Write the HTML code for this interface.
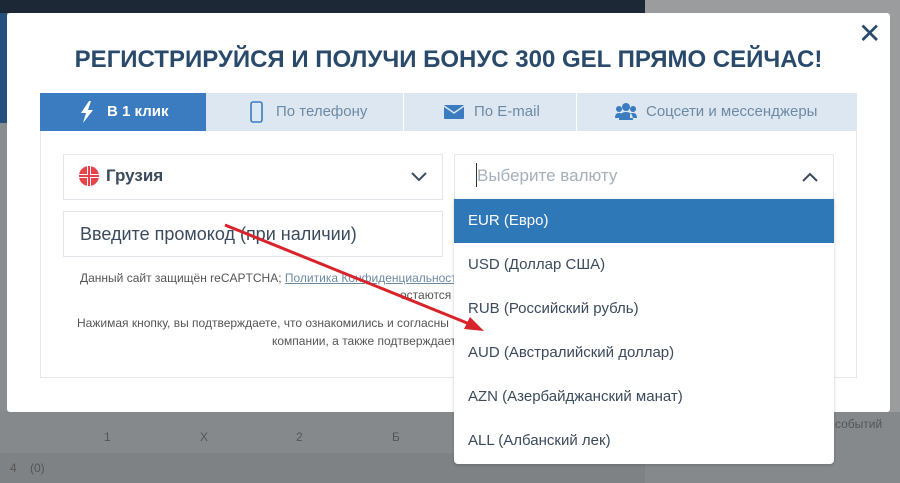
<!DOCTYPE html>
<html><head><meta charset="utf-8"><style>
*{box-sizing:border-box;margin:0;padding:0}
body{width:900px;height:483px;overflow:hidden;position:relative;background:#8a8d90;font-family:"Liberation Sans",sans-serif}
.abs{position:absolute}
.t{color:#3b4a5c}
</style></head><body>
<div class="abs" style="left:0;top:0;width:645px;height:13px;background:#1d2836"></div>
<div class="abs" style="left:0;top:13px;width:7px;height:110px;background:#24507a"></div>
<div class="abs" style="left:645px;top:0;width:255px;height:483px;background:#9a9c9e"></div>
<div class="abs" style="left:0;top:412px;width:900px;height:71px;background:#86898c"></div>
<div class="abs" style="left:0;top:453px;width:645px;height:30px;background:#7f8285"></div>
<div class="abs" style="left:104px;top:430px;color:#555;font-size:12px">1</div>
<div class="abs" style="left:200px;top:430px;color:#555;font-size:12px">X</div>
<div class="abs" style="left:296px;top:430px;color:#555;font-size:12px">2</div>
<div class="abs" style="left:392px;top:430px;color:#555;font-size:12px">Б</div>
<div class="abs" style="left:10px;top:461px;color:#555;font-size:12px">4 &nbsp;&nbsp;&nbsp;(0)</div>
<div class="abs" style="left:835px;top:417px;color:#555;font-size:12px">событий</div>

<div class="abs" style="left:7px;top:13px;width:883px;height:399px;background:#fff;border-radius:3px"></div>
<div class="abs" style="left:858px;top:20px;font-size:28px;color:#2a4a6c;line-height:28px">✕</div>
<div class="abs" style="left:0;top:46px;width:900px;text-align:center;padding-right:3px;font-size:24px;font-weight:bold;color:#2a4a6c;letter-spacing:0">РЕГИСТРИРУЙСЯ И ПОЛУЧИ БОНУС 300 GEL ПРЯМО СЕЙЧАС!</div>

<div class="abs" style="left:40px;top:93px;width:817px;height:38px;background:#dce7f1"></div>
<div class="abs" style="left:40px;top:93px;width:166px;height:38px;background:#3a7cbf;color:#fff;font-size:15px;font-weight:bold;line-height:38px;padding-left:67px">В 1 клик</div>
<svg class="abs" style="left:80px;top:101px" width="14" height="22" viewBox="0 0 14 22"><path d="M9 0L1 12h5l-3 10 10-13H8l3-9z" fill="#fff"/></svg>
<div class="abs" style="left:403px;top:93px;width:1px;height:38px;background:#fff"></div>
<div class="abs" style="left:576px;top:93px;width:1px;height:38px;background:#fff"></div>
<svg class="abs" style="left:250px;top:101px" width="13" height="22"><rect x="1" y="1" width="11" height="20" rx="2" fill="none" stroke="#3a7cbf" stroke-width="1.6"/></svg>
<div class="abs" style="left:276px;top:93px;line-height:38px;font-size:15px;color:#6d8aa5">По телефону</div>
<svg class="abs" style="left:444px;top:105px" width="20" height="14"><rect width="20" height="14" rx="1" fill="#3a7cbf"/><path d="M0 1l10 7 10-7" stroke="#dce7f1" stroke-width="1.5" fill="none"/></svg>
<div class="abs" style="left:474px;top:93px;line-height:38px;font-size:15px;color:#6d8aa5">По E-mail</div>
<svg class="abs" style="left:615px;top:102px" width="22" height="18"><circle cx="11" cy="5" r="4" fill="#3a7cbf"/><circle cx="4" cy="7" r="3" fill="#3a7cbf"/><circle cx="18" cy="7" r="3" fill="#3a7cbf"/><path d="M4 18c0-6 3-8 7-8s7 2 7 8z M0 16c0-4 2-5 4-5s3 1 3 2v3z M22 16c0-4-2-5-4-5s-3 1-3 2v3z" fill="#3a7cbf"/></svg>
<div class="abs" style="left:646px;top:93px;line-height:38px;font-size:15px;color:#6d8aa5">Соцсети и мессенджеры</div>

<div class="abs" style="left:40px;top:131px;width:817px;height:247px;border:1px solid #e4e8ec;border-top:none"></div>

<div class="abs" style="left:63px;top:154px;width:380px;height:46px;border:1px solid #e2e6ea"></div>
<svg class="abs" style="left:79px;top:166px" width="20" height="20"><circle cx="10" cy="10" r="10" fill="#e8424a"/><rect x="8" y="0" width="4" height="20" fill="#fff"/><rect x="0" y="8" width="20" height="4" fill="#fff"/><rect x="9" y="0" width="2" height="20" fill="#e8424a"/><rect x="0" y="9" width="20" height="2" fill="#e8424a"/></svg>
<div class="abs t" style="left:106px;top:166px;font-size:17px;font-weight:bold">Грузия</div>
<svg class="abs" style="left:411px;top:172px" width="16" height="10"><path d="M1 1l7 7 7-7" stroke="#3b4a5c" stroke-width="2" fill="none"/></svg>
<div class="abs" style="left:63px;top:211px;width:380px;height:46px;border:1px solid #e2e6ea"></div>
<div class="abs t" style="left:80px;top:224px;font-size:18px">Введите промокод (при наличии)</div>
<div class="abs" style="left:80px;top:271px;font-size:12px;color:#555">Данный сайт защищён reCAPTCHA; <span style="text-decoration:underline;color:#6d8aa5">Политика Конфиденциальности</span></div>
<div class="abs" style="left:400px;top:288px;font-size:12px;color:#555">остаются</div>
<div class="abs" style="left:77px;top:316px;font-size:12px;color:#555">Нажимая кнопку, вы подтверждаете, что ознакомились и согласны</div>
<div class="abs" style="left:272px;top:334px;font-size:12px;color:#555">компании, а также подтверждаете</div>

<div class="abs" style="left:454px;top:154px;width:380px;height:46px;border:1px solid #e2e6ea;background:#fff"></div>
<div class="abs" style="left:476px;top:163px;width:1px;height:24px;background:#333"></div>
<div class="abs" style="left:477px;top:166px;font-size:17px;color:#a4afba">Выберите валюту</div>
<svg class="abs" style="left:802px;top:172px" width="16" height="10"><path d="M1 9l7-7 7 7" stroke="#3b4a5c" stroke-width="2" fill="none"/></svg>
<div class="abs" style="left:454px;top:199px;width:380px;height:265px;background:#fff;border-radius:0 0 4px 4px;box-shadow:0 1px 3px rgba(0,0,0,.2)"></div>
<div class="abs" style="left:454px;top:199px;width:380px;height:44px;background:#2f78b8;color:#fff;font-size:15px;line-height:44px;padding-left:14px">EUR (Евро)</div>
<div class="abs t" style="left:468px;top:256px;font-size:15px">USD (Доллар США)</div>
<div class="abs t" style="left:468px;top:300px;font-size:15px">RUB (Российский рубль)</div>
<div class="abs t" style="left:468px;top:344px;font-size:15px">AUD (Австралийский доллар)</div>
<div class="abs t" style="left:468px;top:388px;font-size:15px">AZN (Азербайджанский манат)</div>
<div class="abs t" style="left:468px;top:432px;font-size:15px">ALL (Албанский лек)</div>

<svg class="abs" style="left:0;top:0" width="900" height="483"><line x1="225" y1="225" x2="472" y2="325" stroke="#d8232a" stroke-width="3"/><path d="M484 331l-20-2 6-12z" fill="#d8232a"/></svg>
</body></html>
